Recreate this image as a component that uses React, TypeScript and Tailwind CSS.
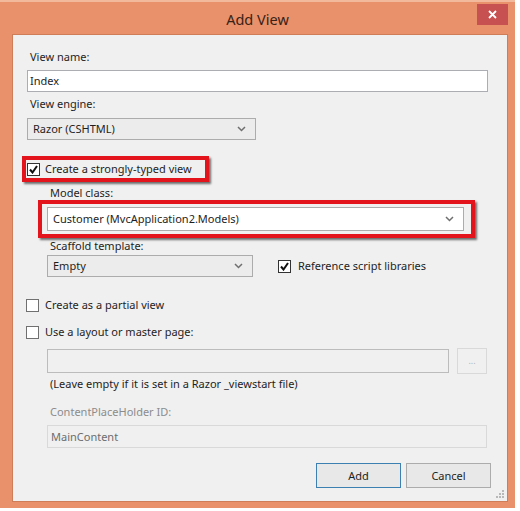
const Chevron = () => (
  <svg width="9" height="6" viewBox="0 0 9 6" className="shrink-0">
    <polyline points="1,1 4.5,4.5 8,1" fill="none" stroke="#6f6f6f" strokeWidth="1.5" />
  </svg>
);

const Check = ({ checked }: { checked?: boolean }) => (
  <div className="w-[13px] h-[13px] border border-[#333] bg-white flex items-center justify-center shrink-0">
    {checked && (
      <svg width="9" height="9" viewBox="0 0 9 9">
        <polyline points="1,4.5 3.5,7.5 8,1" fill="none" stroke="#111" strokeWidth="2" />
      </svg>
    )}
  </div>
);

const Combo = ({ text, w, bg }: { text: string; w: string; bg: string }) => (
  <div className={`${w} ${bg} h-[22px] border border-[#acacac] flex items-center justify-between pl-[5px] pr-[9px]`}>
    <span>{text}</span>
    <Chevron />
  </div>
);

export default function App() {
  return (
    <div className="w-[520px] h-[511px] bg-white text-[11px] leading-[16px] text-[#1e1e1e] whitespace-nowrap" style={{ fontFamily: '"Noto Sans", "Open Sans", sans-serif' }}>
      <div className="w-[515px] h-[508px] bg-[#e8916a] border-t-[2px] border-[#f2b99c] flex flex-col">
        {/* title bar */}
        <div className="relative h-[32px] flex items-center justify-center">
          <span className="text-[14.5px] text-[#3a2216] mt-[1px]">Add View</span>
          <div className="absolute right-[7px] top-[2px] w-[31px] h-[21px] bg-[#c75050] flex items-center justify-center">
            <svg width="9" height="9" viewBox="0 0 9 9">
              <path d="M1 1 L8 8 M8 1 L1 8" stroke="#fff" strokeWidth="1.8" />
            </svg>
          </div>
        </div>

        {/* body */}
        <div className="relative ml-[12px] w-[496px] h-[468px] bg-[#f0f0f0] border border-[#cf7d58] flex flex-col pl-[14px]">
          <div className="mt-[14px] pl-[3px]">View name:</div>
          <div className="mt-[5px] w-[461px] h-[22px] bg-white border border-[#abadb3] pl-[2px] flex items-center">Index</div>
          <div className="mt-[4px] pl-[3px]">View engine:</div>
          <div className="mt-[6px]">
            <Combo text="Razor (CSHTML)" w="w-[229px]" bg="bg-[#ececec]" />
          </div>

          {/* strongly typed */}
          <div className="mt-[16px] ml-[-5px] w-[187px] h-[26px] border-[4px] border-[#e3141b] shadow-[2px_2px_2px_rgba(0,0,0,0.55)] flex items-center gap-[5px] pl-[1px]">
            <Check checked />
            <span>Create a strongly-typed view</span>
          </div>
          <div className="mt-[3px] ml-[23px] h-[15px] leading-[15px]">Model class:</div>
          <div className="ml-[11px] w-[437px] h-[38px] border-[4px] border-[#e3141b] shadow-[2px_2px_2px_rgba(0,0,0,0.55)] pl-[5px] pt-[3px]">
            <div className="w-[417px] h-[24px] bg-white border border-[#acacac] flex items-center justify-between pl-[5px] pr-[9px]">
              <span>Customer (MvcApplication2.Models)</span>
              <Chevron />
            </div>
          </div>
          <div className="ml-[23px] h-[15px] leading-[15px]">Scaffold template:</div>
          <div className="mt-[2px] ml-[20px] flex items-center">
            <Combo text="Empty" w="w-[206px]" bg="bg-[#ececec]" />
            <div className="ml-[25px] flex items-center gap-[7px]">
              <Check checked />
              <span>Reference script libraries</span>
            </div>
          </div>

          <div className="mt-[20px] ml-[-1px] h-[16px] flex items-center gap-[6px]">
            <div className="w-[13px] h-[13px] border border-[#707070] bg-white" />
            <span>Create as a partial view</span>
          </div>
          <div className="mt-[11px] ml-[-1px] h-[16px] flex items-center gap-[6px]">
            <div className="w-[13px] h-[13px] border border-[#707070] bg-white" />
            <span>Use a layout or master page:</span>
          </div>
          <div className="mt-[8px] ml-[20px] flex items-center">
            <div className="w-[402px] h-[24px] bg-[#f0f0f0] border border-[#bcbcbc]" />
            <div className="ml-[8px] w-[30px] h-[26px] border border-[#d9d9d9] bg-[#f0f0f0] flex items-center justify-center text-[9px] text-[#b5b5b5]">...</div>
          </div>
          <div className="mt-[2px] ml-[23px]">(Leave empty if it is set in a Razor _viewstart file)</div>
          <div className="mt-[12px] ml-[23px] text-[#8c8c8c]">ContentPlaceHolder ID:</div>
          <div className="mt-[5px] ml-[20px] w-[440px] h-[23px] border border-[#d9d9d9] bg-[#f0f0f0] text-[#6d6d6d] flex items-center pl-[3px]">MainContent</div>

          <div className="mt-[15px] flex justify-end gap-[5px] pr-[16px]">
            <div className="w-[85px] h-[25px] border border-[#3c7fb1] bg-[#e8e8e8] flex items-center justify-center">Add</div>
            <div className="w-[85px] h-[25px] border border-[#acacac] bg-[#e8e8e8] flex items-center justify-center">Cancel</div>
          </div>

          {/* resize grip */}
          <svg className="absolute right-[3px] bottom-[3px]" width="8" height="8" viewBox="0 0 8 8">
            <rect x="6" y="0" width="2" height="2" fill="#b8b8b8" />
            <rect x="3" y="3" width="2" height="2" fill="#b8b8b8" />
            <rect x="6" y="3" width="2" height="2" fill="#b8b8b8" />
            <rect x="0" y="6" width="2" height="2" fill="#b8b8b8" />
            <rect x="3" y="6" width="2" height="2" fill="#b8b8b8" />
            <rect x="6" y="6" width="2" height="2" fill="#b8b8b8" />
          </svg>
        </div>
      </div>
    </div>
  );
}
